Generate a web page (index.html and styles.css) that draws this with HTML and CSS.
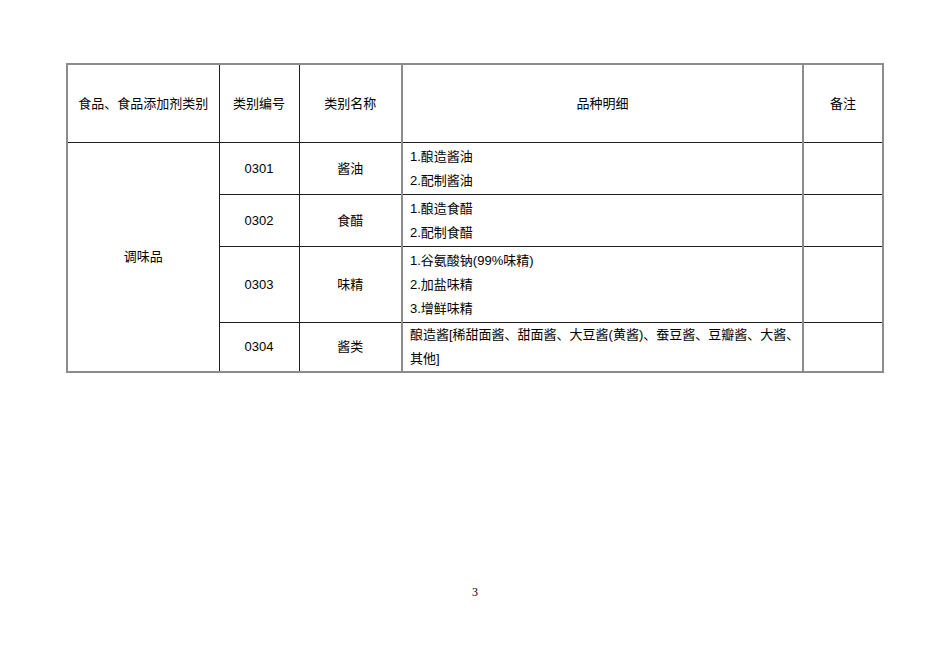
FILE: index.html
```html
<!DOCTYPE html>
<html lang="zh">
<head>
<meta charset="utf-8">
<link rel="stylesheet" href="styles.css">
</head>
<body>
<div class="page">
  <table class="grid">
    <colgroup>
      <col class="c1"><col class="c2"><col class="c3"><col class="c4"><col class="c5">
    </colgroup>
    <tr class="head">
      <td>食品、食品添加剂类别</td>
      <td>类别编号</td>
      <td>类别名称</td>
      <td class="soft">品种明细</td>
      <td class="soft">备注</td>
    </tr>
    <tr class="r1">
      <td rowspan="4" class="cat">调味品</td>
      <td>0301</td>
      <td>酱油</td>
      <td class="soft detail">1.酿造酱油<br>2.配制酱油</td>
      <td class="soft"></td>
    </tr>
    <tr class="r2">
      <td>0302</td>
      <td>食醋</td>
      <td class="soft detail">1.酿造食醋<br>2.配制食醋</td>
      <td class="soft"></td>
    </tr>
    <tr class="r3">
      <td>0303</td>
      <td>味精</td>
      <td class="soft detail">1.谷氨酸钠(99%味精)<br>2.加盐味精<br>3.增鲜味精</td>
      <td class="soft"></td>
    </tr>
    <tr class="r4">
      <td>0304</td>
      <td>酱类</td>
      <td class="soft detail">酿造酱[稀甜面酱、甜面酱、大豆酱(黄酱)、蚕豆酱、豆瓣酱、大酱、<br>其他]</td>
      <td class="soft"></td>
    </tr>
  </table>
  <div class="pageno">3</div>
</div>
</body>
</html>
```

FILE: styles.css
```css
html, body {
  margin: 0;
  padding: 0;
  background: #ffffff;
}

.page {
  width: 950px;
  height: 672px;
  padding: 63px 0 0 66px;
  box-sizing: border-box;
  font-family: "Liberation Sans", "Noto Sans CJK SC", sans-serif;
  font-size: 13px;
  color: #000;
}

.grid {
  border-collapse: collapse;
  table-layout: fixed;
  width: 818px;
  border: 2px solid #8c8c8c;
}

.c1 { width: 152px; }
.c2 { width: 80px; }
.c3 { width: 103px; }
.c4 { width: 401px; }
.c5 { width: 80px; }

.grid td {
  border: 1px solid #1e1e1e;
  padding: 0;
  text-align: center;
  vertical-align: middle;
  line-height: 24px;
}

.grid td.soft {
  border-left: 2px solid #8c8c8c;
}

.grid td.detail {
  text-align: left;
  padding-left: 7px;
}

.head td { height: 77px; }
.r1 td { height: 51px; }
.r2 td { height: 51px; }
.r3 td { height: 75px; }
.r4 td { height: 48px; }

.pageno {
  width: 950px;
  margin-top: 212px;
  margin-left: -66px;
  text-align: center;
  font-family: "Liberation Serif", serif;
  font-size: 12px;
  color: #000;
}
```
